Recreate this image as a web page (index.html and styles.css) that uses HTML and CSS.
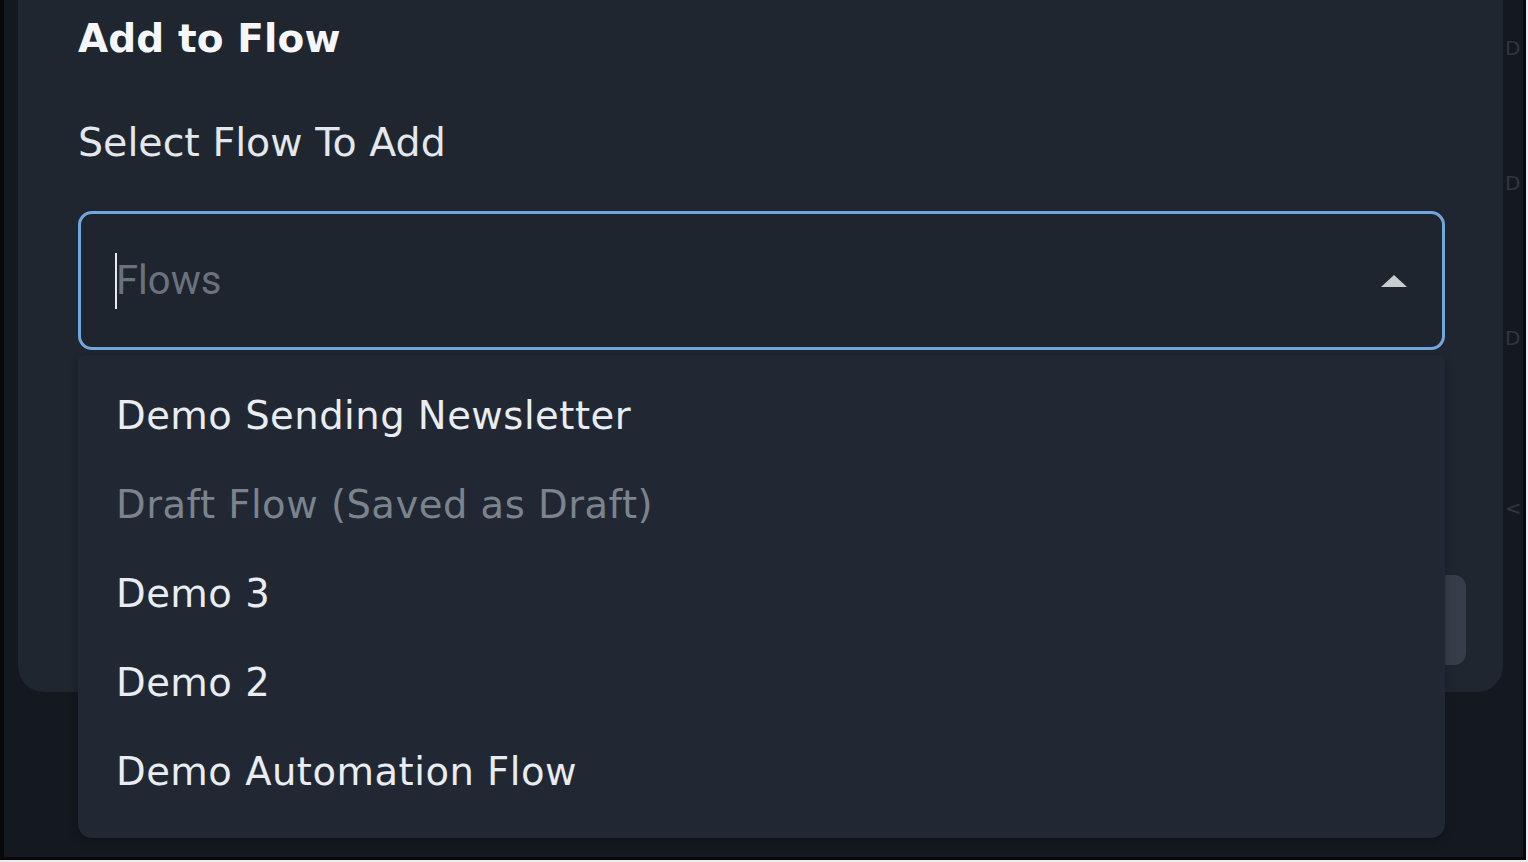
FILE: index.html
```html
<!DOCTYPE html>
<html>
<head>
<meta charset="utf-8">
<title>Add to Flow</title>
<link rel="stylesheet" href="styles.css">
</head>
<body>
<div class="frame">
  <div class="modal">
    <h1 class="title">Add to Flow</h1>
    <div class="label">Select Flow To Add</div>
    <div class="select">
      <div class="input">
        <span class="caret"></span>
        <span class="placeholder">Flows</span>
        <span class="arrow"></span>
      </div>
      <ul class="menu">
        <li class="item">Demo Sending Newsletter</li>
        <li class="item disabled">Draft Flow (Saved as Draft)</li>
        <li class="item">Demo 3</li>
        <li class="item">Demo 2</li>
        <li class="item">Demo Automation Flow</li>
      </ul>
    </div>
    <div class="footer">
      <div class="btn"></div>
    </div>
  </div>
  <div class="behind">
    <span class="ghost g1">D</span>
    <span class="ghost g2">D</span>
    <span class="ghost g3">D</span>
    <span class="ghost g4">&lt;</span>
  </div>
</div>
</body>
</html>
```
FILE: styles.css
```css
html, body {
  margin: 0;
  padding: 0;
}
body {
  width: 1528px;
  height: 862px;
  overflow: hidden;
  background: #ececec;
  font-family: "DejaVu Sans", "Inter", sans-serif;
}
.frame {
  box-sizing: border-box;
  width: 1526px;
  height: 860px;
  border-left: 4px solid #06080a;
  border-right: 3px solid #06080a;
  border-bottom: 3px solid #06080a;
  background: #141920;
  display: flex;
  align-items: flex-start;
  overflow: hidden;
}
.modal {
  box-sizing: border-box;
  margin-left: 14px;
  width: 1485px;
  height: 692px;
  flex: none;
  background: #1f2630;
  border-radius: 0 0 26px 26px;
  padding: 0 37px 0 60px;
  display: flex;
  flex-direction: column;
}
.title {
  margin: 0;
  padding-top: 11px;
  font-size: 39px;
  line-height: 56px;
  font-weight: 700;
  color: #f5f7fa;
  letter-spacing: 0.1px;
}
.label {
  margin-top: 51px;
  font-size: 39.5px;
  line-height: 48px;
  font-weight: 400;
  color: #e4e8ed;
}
.select {
  position: relative;
  margin-top: 45px;
  margin-right: 21px;
}
.input {
  box-sizing: border-box;
  height: 139px;
  border: 3px solid #72a6df;
  border-radius: 14px;
  background: #1e252e;
  display: flex;
  align-items: center;
  padding: 0 35px 0 34px;
}
.caret {
  width: 2px;
  height: 56px;
  background: #e8e8e8;
  flex: none;
}
.placeholder {
  margin-left: -1px;
  font-family: "Roboto", "Liberation Sans", sans-serif;
  font-size: 40px;
  line-height: 40px;
  color: #6b727b;
}
.arrow {
  margin-left: auto;
  width: 0;
  height: 0;
  border-left: 13.5px solid transparent;
  border-right: 13.5px solid transparent;
  border-bottom: 12px solid #c9ccd0;
}
.menu {
  position: absolute;
  top: calc(100% + 5px);
  left: 0;
  right: 0;
  box-sizing: border-box;
  height: 483px;
  margin: 0;
  padding: 16px 0 22px;
  list-style: none;
  background: #212833;
  border-radius: 6px 6px 14px 14px;
  box-shadow: 0 4px 10px rgba(0, 0, 0, 0.25);
}
.item {
  height: 89px;
  display: flex;
  align-items: center;
  padding-left: 38px;
  font-size: 38.5px;
  letter-spacing: 0.5px;
  color: #e9edf2;
}
.item.disabled {
  color: #7b838d;
}
.footer {
  margin-top: auto;
  padding-bottom: 27px;
  display: flex;
  justify-content: flex-end;
}
.btn {
  width: 200px;
  height: 90px;
  background: #363e49;
  border-radius: 12px;
}
.behind {
  width: 20px;
  flex: none;
  overflow: hidden;
  display: flex;
  flex-direction: column;
  padding-top: 36px;
}
.ghost {
  font-size: 20px;
  line-height: 24px;
  color: #2f3640;
  padding-left: 2px;
  white-space: nowrap;
}
.g2 { margin-top: 111px; }
.g3 { margin-top: 131px; }
.g4 { margin-top: 146px; }
```
